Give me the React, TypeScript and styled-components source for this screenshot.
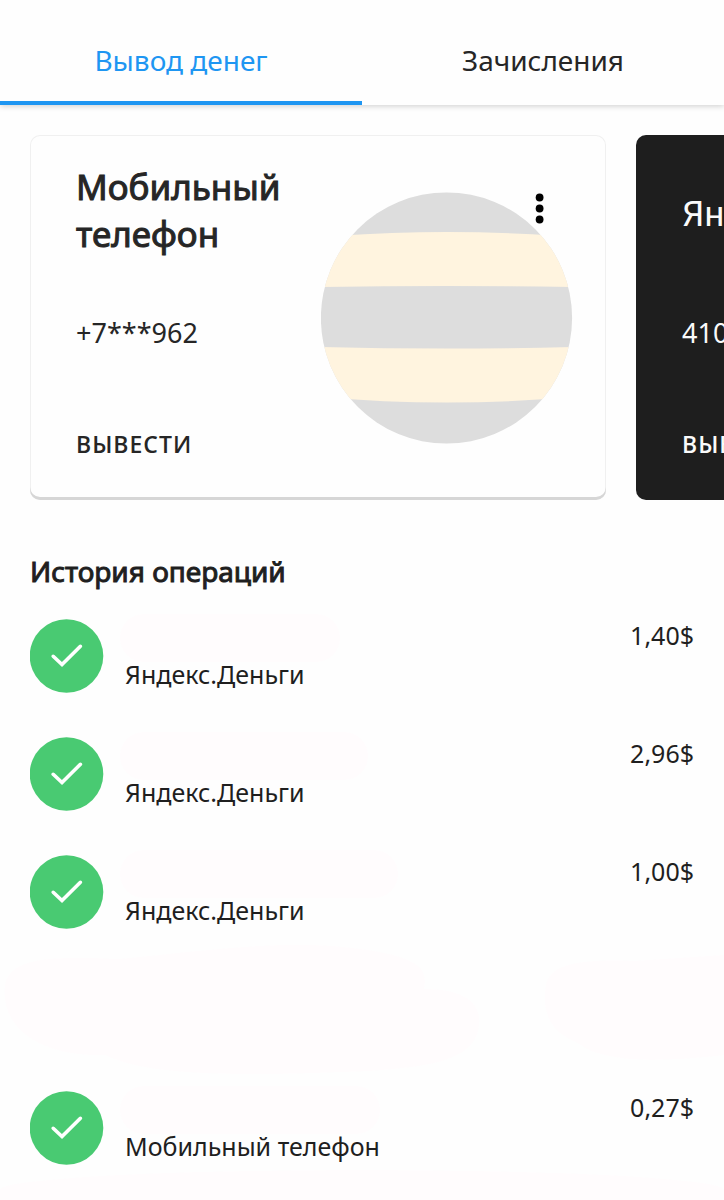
import React from "react";
import styled, { createGlobalStyle } from "styled-components";

const GlobalStyle = createGlobalStyle`
  * { box-sizing: border-box; }
  body {
    margin: 0;
    background: #fefefe;
    color: #1f1f1f;
    font-family: "Noto Sans", "Open Sans", sans-serif;
    overflow-x: hidden;
  }
  button { font: inherit; color: inherit; background: none; border: 0; padding: 0; cursor: pointer; }
  h1, h2, p, ul { margin: 0; padding: 0; }
`;

const Page = styled.div`
  min-height: 100vh;
  overflow: hidden;
  display: flex;
  flex-direction: column;
`;

const Tabs = styled.nav`
  display: flex;
  box-shadow: 0 1px 6px rgba(0, 0, 0, 0.2);
`;

const Tab = styled.button<{ $active?: boolean }>`
  && {
    flex: 1;
    padding: 40px 0 21px;
    font-size: 28px;
    line-height: 40px;
    color: ${(p) => (p.$active ? "#1e96f2" : "#262626")};
    border-bottom: 4px solid ${(p) => (p.$active ? "#1e96f2" : "transparent")};
  }
`;

const Carousel = styled.section`
  display: flex;
  gap: 30px;
  padding: 30px 0 10px 30px;
  overflow-x: auto;
  scrollbar-width: none;
`;

const Card = styled.article<{ $dark?: boolean }>`
  position: relative;
  flex: 0 0 83%;
  display: flex;
  justify-content: space-between;
  padding: 28px 33px 36px 46px;
  border-radius: 10px;
  background: ${(p) => (p.$dark ? "#1e1e1e" : "#fefefe")};
  color: ${(p) => (p.$dark ? "#fafafa" : "#262626")};
  box-shadow: ${(p) =>
    p.$dark ? "none" : "inset 0 -3px 0 #d6d6d6, inset 0 0 0 1px #f0f0f0"};
`;

const CardText = styled.div`
  display: flex;
  flex-direction: column;
  align-items: flex-start;
`;

const CardTitle = styled.h2`
  width: 230px;
  min-height: 94px;
  font-size: 35px;
  line-height: 47px;
  font-weight: 400;
  -webkit-text-stroke: 1px currentColor;
`;

const WalletTitle = styled.h2`
  min-height: 94px;
  padding-top: 28px;
  font-family: Roboto, "Noto Sans", sans-serif;
  font-size: 35px;
  line-height: 48px;
  font-weight: 400;
`;

const Account = styled.p`
  margin-top: 56px;
  font-size: 27px;
  line-height: 40px;
`;

const Action = styled.button`
  && {
    margin-top: 71px;
    font-family: "Open Sans", "Noto Sans", sans-serif;
    font-size: 23px;
    line-height: 40px;
    font-weight: 600;
    letter-spacing: 1px;
  }
`;

const Emblem = styled.svg`
  flex: none;
  width: 252px;
  height: 252px;
  margin-top: 29px;
`;

const MenuButton = styled.button`
  && {
    position: absolute;
    top: 58px;
    right: 61px;
    width: 10px;
    height: 32px;
  }
  svg { display: block; }
`;

const History = styled.section`
  flex: 1;
  display: flex;
  flex-direction: column;
  padding: 41px 30px 0;
`;

const HistoryTitle = styled.h1`
  font-size: 28px;
  line-height: 40px;
  font-weight: 400;
  -webkit-text-stroke: 1px currentColor;
`;

const Operations = styled.ul`
  display: flex;
  flex-direction: column;
  gap: 44px;
  margin-top: 28px;
  list-style: none;
`;

const Operation = styled.li`
  display: flex;
  min-height: 74px;
`;

const Status = styled.svg`
  flex: none;
  width: 74px;
  height: 74px;
`;

const Details = styled.div`
  flex: 1;
  margin-left: 21px;
`;

const Concealed = styled.div<{ $width: number }>`
  width: ${(p) => p.$width}px;
  height: 38px;
  border-radius: 20px;
  background: #fffcfd;
  box-shadow: 0 0 0 5px #fffcfd;
`;

const Source = styled.p`
  font-size: 25px;
  line-height: 34px;
`;

const Amount = styled.p`
  font-size: 25px;
  line-height: 32px;
`;

const HiddenOperation = styled.li`
  display: flex;
  justify-content: space-between;
  align-items: center;
  height: 74px;
  margin: 0 -30px;
`;

const Patch = styled.svg`
  flex: none;
  fill: #fffcfd;
`;

const Footer = styled.div`
  flex: 1;
  min-height: 30px;
  margin: 5px -30px 0;
  border-radius: 50% 50% 0 0 / 20px 20px 0 0;
  background: #fffcfd;
`;

const CheckIcon = () => (
  <Status viewBox="0 0 74 74" role="img" aria-label="Выполнено">
    <circle cx="36.5" cy="37" r="36.8" fill="#49ca72" />
    <path
      d="M23.2 37.3 L32 45.6 L50.4 27.3"
      fill="none"
      stroke="#fff"
      strokeWidth="3.6"
      strokeLinecap="round"
    />
  </Status>
);

const StripedEmblem = () => (
  <Emblem viewBox="0 0 252 252" aria-hidden="true">
    <defs>
      <clipPath id="disc">
        <circle cx="125.5" cy="126" r="125.6" />
      </clipPath>
    </defs>
    <g clipPath="url(#disc)">
      <rect width="252" height="252" fill="#ddd" />
      <path d="M0 45 Q126 35 252 45 V95 Q126 93 0 95 Z" fill="#fff4df" />
      <path d="M0 155 Q126 158 252 155 V205 Q126 216 0 205 Z" fill="#fff4df" />
    </g>
  </Emblem>
);

type Item = { source: string; amount: string; width: number } | null;

const items: Item[] = [
  { source: "Яндекс.Деньги", amount: "1,40$", width: 210 },
  { source: "Яндекс.Деньги", amount: "2,96$", width: 238 },
  { source: "Яндекс.Деньги", amount: "1,00$", width: 268 },
  null,
  { source: "Мобильный телефон", amount: "0,27$", width: 250 },
];

export default function App() {
  return (
    <Page>
      <GlobalStyle />
      <Tabs>
        <Tab type="button" $active aria-current="page">Вывод денег</Tab>
        <Tab type="button">Зачисления</Tab>
      </Tabs>

      <Carousel>
        <Card>
          <CardText>
            <CardTitle>Мобильный телефон</CardTitle>
            <Account>+7***962</Account>
            <Action type="button">ВЫВЕСТИ</Action>
          </CardText>
          <StripedEmblem />
          <MenuButton type="button" aria-label="Меню">
            <svg width="10" height="32" viewBox="0 0 10 32">
              <circle cx="4.6" cy="4.5" r="3.9" />
              <circle cx="4.6" cy="15.5" r="3.9" />
              <circle cx="4.6" cy="26.5" r="3.9" />
            </svg>
          </MenuButton>
        </Card>
        <Card $dark>
          <CardText>
            <WalletTitle>Яндекс</WalletTitle>
            <Account>410</Account>
            <Action type="button">ВЫВЕСТИ</Action>
          </CardText>
        </Card>
      </Carousel>

      <History>
        <HistoryTitle>История операций</HistoryTitle>
        <Operations>
          {items.map((item, i) =>
            item ? (
              <Operation key={i}>
                <CheckIcon />
                <Details>
                  <Concealed $width={item.width} />
                  <Source>{item.source}</Source>
                </Details>
                <Amount>{item.amount}</Amount>
              </Operation>
            ) : (
              <HiddenOperation key={i} aria-hidden="true">
                <Patch width="480" height="130" viewBox="0 0 480 130">
                  <path d="M5 40 C10 10 60 12 120 14 C220 4 290 -6 360 4 C420 12 428 24 424 44 C470 44 484 62 478 86 C470 118 420 122 370 126 C270 130 150 134 106 110 C50 112 0 90 5 40 Z" />
                </Patch>
                <Patch width="180" height="110" viewBox="0 0 180 110">
                  <path d="M2 30 C6 8 40 4 90 6 L180 0 V100 C130 106 60 110 34 88 C4 76 -2 56 2 30 Z" />
                </Patch>
              </HiddenOperation>
            )
          )}
        </Operations>
        <Footer />
      </History>
    </Page>
  );
}
